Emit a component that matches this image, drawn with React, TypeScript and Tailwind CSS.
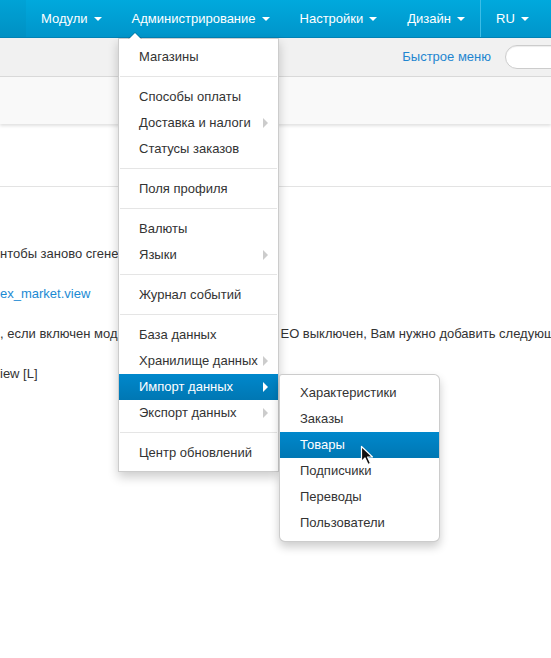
import React from "react";

const Caret = () => (
  <span className="inline-block ml-[6px] w-0 h-0 border-l-[4px] border-r-[4px] border-t-[4px] border-l-transparent border-r-transparent border-t-white align-middle" />
);

const NavItem = ({ label }: { label: string }) => (
  <div className="flex items-center px-[15px] h-full text-white text-[13px] whitespace-nowrap">
    <span>{label}</span>
    <Caret />
  </div>
);

type Item = { label: string; sub?: boolean; active?: boolean } | "divider";

const mainItems: Item[] = [
  { label: "Магазины" },
  "divider",
  { label: "Способы оплаты" },
  { label: "Доставка и налоги", sub: true },
  { label: "Статусы заказов" },
  "divider",
  { label: "Поля профиля" },
  "divider",
  { label: "Валюты" },
  { label: "Языки", sub: true },
  "divider",
  { label: "Журнал событий" },
  "divider",
  { label: "База данных" },
  { label: "Хранилище данных", sub: true },
  { label: "Импорт данных", sub: true, active: true },
  { label: "Экспорт данных", sub: true },
  "divider",
  { label: "Центр обновлений" },
];

const subItems: Item[] = [
  { label: "Характеристики" },
  { label: "Заказы" },
  { label: "Товары", active: true },
  { label: "Подписчики" },
  { label: "Переводы" },
  { label: "Пользователи" },
];

const MenuList = ({ items }: { items: Item[] }) => (
  <>
    {items.map((it, i) =>
      it === "divider" ? (
        <div key={i} className="my-[6px] mx-px h-px bg-[#e5e5e5] border-b border-white box-content" />
      ) : (
        <div
          key={i}
          className={
            it.active
              ? "flex items-center h-[26px] pl-[20px] pr-[10px] text-white bg-gradient-to-b from-[#0088cc] to-[#0077b3] whitespace-nowrap"
              : "flex items-center h-[26px] pl-[20px] pr-[10px] text-[#333] whitespace-nowrap"
          }
        >
          <span className="flex-1">{it.label}</span>
          {it.sub && (
            <span
              className={
                it.active
                  ? "w-0 h-0 border-t-[5px] border-b-[5px] border-l-[5px] border-t-transparent border-b-transparent border-l-white"
                  : "w-0 h-0 border-t-[5px] border-b-[5px] border-l-[5px] border-t-transparent border-b-transparent border-l-[#cccccc]"
              }
            />
          )}
        </div>
      )
    )}
  </>
);

export default function App() {
  return (
    <div
      className="relative w-full h-[658px] overflow-hidden bg-white text-[13px] text-[#333]"
      style={{ fontFamily: '"Liberation Sans", Arial, sans-serif' }}
    >
      {/* Top navbar */}
      <div className="flex h-[38px] bg-gradient-to-b from-[#00a9dd] to-[#0095ca] border-b border-[#0082b5]">
        <div className="w-[26px] h-full bg-[#00000008]" />
        <NavItem label="Модули" />
        <NavItem label="Администрирование" />
        <NavItem label="Настройки" />
        <NavItem label="Дизайн" />
        <div className="w-px h-full bg-[#3cbde6]" />
        <NavItem label="RU" />
      </div>

      {/* Sub bar */}
      <div className="flex items-center justify-end h-[39px] bg-[#f1f1f1] border-b border-[#dadada]">
        <span className="text-[#1f86d0] whitespace-nowrap">Быстрое меню</span>
        <div className="ml-[14px] mr-[-104px] w-[150px] h-[24px] shrink-0 rounded-full border border-[#cccccc] bg-white shadow-[inset_0_1px_1px_rgba(0,0,0,0.075)]" />
      </div>

      {/* Strip */}
      <div className="h-[47px] bg-[#f9f9f9] shadow-[0_2px_3px_rgba(0,0,0,0.12)]" />

      {/* Content */}
      <div className="mt-[62px] border-t border-[#e3e3e3]" />
      <div className="pt-[57px] leading-[20px] whitespace-nowrap">
        <p>нтобы заново сгенерир</p>
        <p className="mt-[20px] text-[#1b8ad3]">ex_market.view</p>
        <p className="mt-[20px]">
          , если включен мод
          <span className="inline-block w-[163px] align-top" />
          ЕО выключен, Вам нужно добавить следующие
        </p>
        <p className="mt-[20px]">iew [L]</p>
      </div>

      {/* Main dropdown */}
      <div className="absolute left-[118px] top-[38px] w-[161px] py-[5px] bg-white border border-[rgba(0,0,0,0.2)] shadow-[0_5px_10px_rgba(0,0,0,0.2)]">
        <div className="absolute left-[9px] top-[-7px] w-0 h-0 border-l-[7px] border-r-[7px] border-b-[7px] border-l-transparent border-r-transparent border-b-[rgba(0,0,0,0.2)]" />
        <div className="absolute left-[10px] top-[-6px] w-0 h-0 border-l-[6px] border-r-[6px] border-b-[6px] border-l-transparent border-r-transparent border-b-white" />
        <MenuList items={mainItems} />
      </div>

      {/* Submenu */}
      <div className="absolute left-[279px] top-[374px] w-[161px] py-[5px] bg-white border border-[rgba(0,0,0,0.2)] rounded-[6px] rounded-tl-[3px] shadow-[0_5px_10px_rgba(0,0,0,0.2)]">
        <MenuList items={subItems} />
      </div>

      {/* Mouse cursor */}
      <svg
        className="absolute left-[360px] top-[445px]"
        width="16"
        height="22"
        viewBox="0 0 16 22"
      >
        <path
          d="M1.5 1.5 L1.5 16.5 L5 13 L8 19.5 L10.5 18.3 L7.6 12 L12.5 12 Z"
          fill="#111"
          stroke="#fff"
          strokeWidth="1.2"
          strokeLinejoin="round"
        />
      </svg>
    </div>
  );
}
